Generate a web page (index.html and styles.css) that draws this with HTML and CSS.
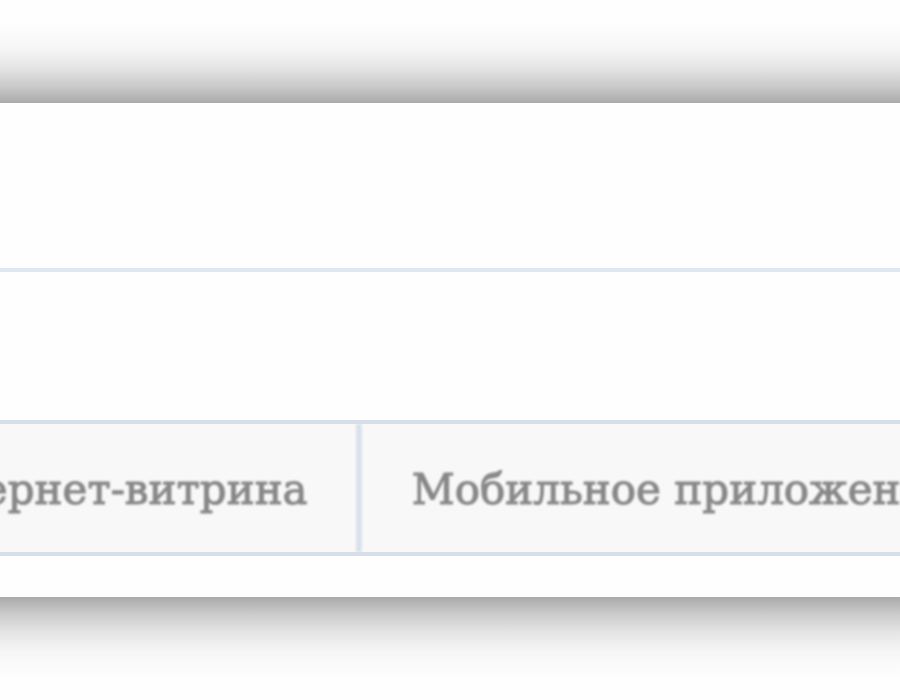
FILE: index.html
```html
<!DOCTYPE html>
<html lang="ru">
<head>
<meta charset="utf-8">
<title>Витрина</title>
<link rel="stylesheet" href="styles.css">
</head>
<body>
<div class="page">
  <div class="shade shade-top"></div>
  <div class="panel">
    <div class="panel-head"></div>
    <div class="panel-gap"></div>
    <div class="tabs">
      <div class="tab">Интернет-витрина</div>
      <div class="tab">Мобильное приложение</div>
    </div>
  </div>
  <div class="shade shade-bottom"></div>
</div>
</body>
</html>
```
FILE: styles.css
```css
html, body {
  margin: 0;
  padding: 0;
  background: #fefefe;
  overflow: hidden;
}
.page {
  width: 900px;
  height: 700px;
  padding-top: 25px;
  box-sizing: border-box;
  display: flex;
  flex-direction: column;
}
.shade {
  height: 78px;
  flex-shrink: 0;
}
.shade-top {
  background: linear-gradient(to bottom, #fdfdfd 0%, #f6f6f6 30%, #e4e4e4 55%, #cbcbcb 78%, #aaaaaa 100%);
}
.shade-bottom {
  background: linear-gradient(to top, #fdfdfd 0%, #f6f6f6 30%, #e4e4e4 55%, #cbcbcb 78%, #aaaaaa 100%);
}
.panel {
  height: 494px;
  background: #fefefe;
  display: flex;
  flex-direction: column;
  overflow: hidden;
  flex-shrink: 0;
}
.panel-head {
  height: 165px;
  border-bottom: 4px solid #dfe7f0;
  flex-shrink: 0;
}
.panel-gap {
  height: 148px;
  flex-shrink: 0;
}
.tabs {
  display: flex;
  margin-left: -155px;
  border-top: 4px solid #d6dfe9;
  border-bottom: 4px solid #d6dfe9;
  background: #f8f8f8;
  height: 128px;
  width: max-content;
}
.tab {
  display: flex;
  align-items: center;
  padding: 2px 48px 0 50px;
  font-family: "DejaVu Serif", Georgia, serif;
  font-size: 42px;
  color: #888888;
  -webkit-text-stroke: 1.1px #888888;
  white-space: nowrap;
  filter: blur(0.8px);
}
.tab + .tab {
  border-left: 6px solid #d9e2ec;
}
```
